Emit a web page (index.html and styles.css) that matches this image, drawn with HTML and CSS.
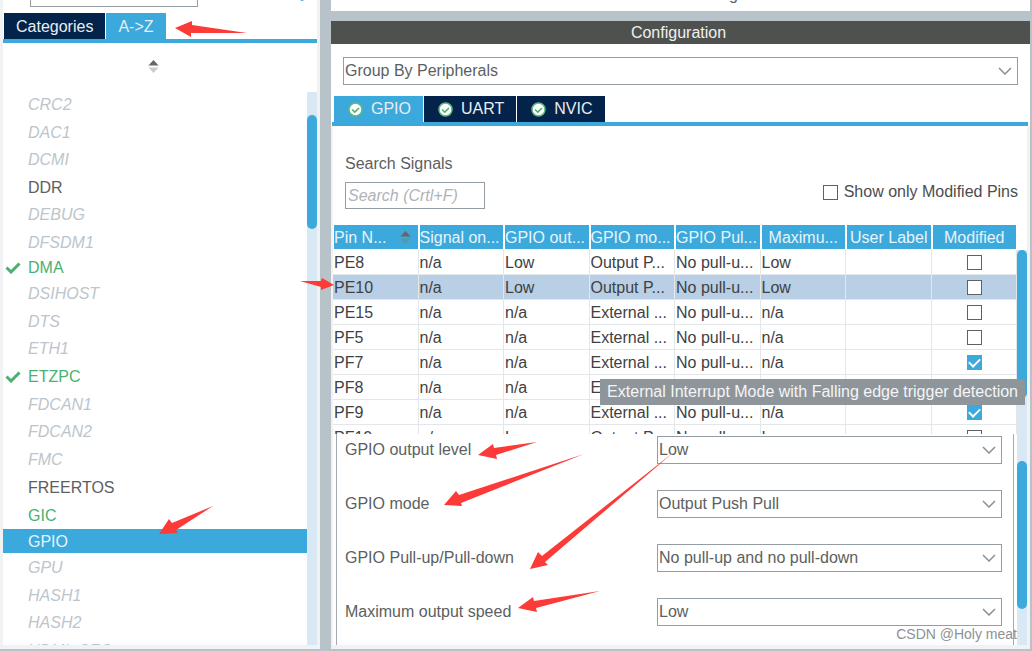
FILE: index.html
```html
<!DOCTYPE html>
<html lang="en">
<head>
<meta charset="utf-8">
<title>Pinout &amp; Configuration</title>
<link rel="stylesheet" href="styles.css">
</head>
<body>
<div class="app">
  <aside class="sidebar">
    <div class="sidebar-top">
      <input class="quick-search" type="text" aria-label="Search">
      <span class="gear"></span>
    </div>
    <div class="tabs">
      <button class="tab" type="button">Categories</button>
      <button class="tab active" type="button">A-&gt;Z</button>
    </div>
    <div class="sort-row">
      <svg class="sort" viewBox="0 0 11 14"><path d="M0 6 5.500 0 11 6z" fill="#666"/><path d="M0 8h11L5.500 14z" fill="#ccc"/></svg>
    </div>
    <div class="list-area">
      <ul class="list">
        <li>CRC2</li>
        <li>DAC1</li>
        <li>DCMI</li>
        <li class="plain">DDR</li>
        <li>DEBUG</li>
        <li>DFSDM1</li>
        <li class="on"><svg class="tick" viewBox="0 0 16 12"><path d="M1.500 5.500 6 10 14.500 1.500" /></svg>DMA</li>
        <li>DSIHOST</li>
        <li>DTS</li>
        <li>ETH1</li>
        <li class="on"><svg class="tick" viewBox="0 0 16 12"><path d="M1.500 5.500 6 10 14.500 1.500" /></svg>ETZPC</li>
        <li>FDCAN1</li>
        <li>FDCAN2</li>
        <li>FMC</li>
        <li class="plain">FREERTOS</li>
        <li class="on">GIC</li>
        <li class="selected">GPIO</li>
        <li>GPU</li>
        <li>HASH1</li>
        <li>HASH2</li>
        <li>HDMI_CEC</li>
      </ul>
      <div class="track list-track"><div class="thumb"></div></div>
    </div>
  </aside>

  <main class="content">
    <div class="mode-strip"><span>g</span></div>
    <section class="config">
      <h1 class="config-title">Configuration</h1>
      <div class="group">
        <div class="combo">
          <select aria-label="Grouping"><option>Group By Peripherals</option></select>
          <svg class="chevron" viewBox="0 0 14 8"><path d="M1 1l6 6 6-6"/></svg>
        </div>
      </div>
      <div class="tabs config-tabs">
        <button class="tab active" type="button"><svg class="ok" viewBox="0 0 15 15"><circle cx="7.500" cy="7.500" r="6.500"/><path d="M4 7.500l2.800 2.600L11 6"/></svg>GPIO</button>
        <button class="tab" type="button"><svg class="ok" viewBox="0 0 15 15"><circle cx="7.500" cy="7.500" r="6.500"/><path d="M4 7.500l2.800 2.600L11 6"/></svg>UART</button>
        <button class="tab" type="button"><svg class="ok" viewBox="0 0 15 15"><circle cx="7.500" cy="7.500" r="6.500"/><path d="M4 7.500l2.800 2.600L11 6"/></svg>NVIC</button>
      </div>
      <div class="panel">
        <div class="filter">
          <div class="search">
            <label for="signals">Search Signals</label>
            <input id="signals" type="text" placeholder="Search (Crtl+F)">
          </div>
          <label class="only"><input type="checkbox">Show only Modified Pins</label>
        </div>
        <div class="pins">
          <table>
            <thead>
              <tr>
                <th>Pin N...<svg class="sort" viewBox="0 0 11 14"><path d="M0 6 5.500 0 11 6z" fill="#666"/><path d="M0 8h11L5.500 14z" fill="#5596b8"/></svg></th>
                <th>Signal on...</th><th>GPIO out...</th><th>GPIO mo...</th><th>GPIO Pul...</th>
                <th class="center">Maximu...</th><th class="center">User Label</th><th class="center">Modified</th>
              </tr>
            </thead>
            <tbody>
              <tr><td>PE8</td><td>n/a</td><td>Low</td><td>Output P...</td><td>No pull-u...</td><td>Low</td><td></td><td class="center"><input type="checkbox" aria-label="PE8 modified"></td></tr>
              <tr class="current"><td>PE10</td><td>n/a</td><td>Low</td><td>Output P...</td><td>No pull-u...</td><td>Low</td><td></td><td class="center"><input type="checkbox" aria-label="PE10 modified"></td></tr>
              <tr><td>PE15</td><td>n/a</td><td>n/a</td><td>External ...</td><td>No pull-u...</td><td>n/a</td><td></td><td class="center"><input type="checkbox" aria-label="PE15 modified"></td></tr>
              <tr><td>PF5</td><td>n/a</td><td>n/a</td><td>External ...</td><td>No pull-u...</td><td>n/a</td><td></td><td class="center"><input type="checkbox" aria-label="PF5 modified"></td></tr>
              <tr><td>PF7</td><td>n/a</td><td>n/a</td><td>External ...</td><td>No pull-u...</td><td>n/a</td><td></td><td class="center"><input type="checkbox" checked aria-label="PF7 modified"></td></tr>
              <tr><td>PF8</td><td>n/a</td><td>n/a</td><td>External ...</td><td>No pull-u...</td><td>n/a</td><td></td><td class="center"><input type="checkbox" checked aria-label="PF8 modified"></td></tr>
              <tr><td>PF9</td><td>n/a</td><td>n/a</td><td>External ...</td><td>No pull-u...</td><td>n/a</td><td></td><td class="center"><input type="checkbox" checked aria-label="PF9 modified"></td></tr>
              <tr><td>PF10</td><td>n/a</td><td>Low</td><td>Output P...</td><td>No pull-u...</td><td>Low</td><td></td><td class="center"><input type="checkbox" aria-label="PF10 modified"></td></tr>
            </tbody>
          </table>
          <div class="track pins-track"><div class="thumb"></div></div>
          <div class="tooltip" role="tooltip">External Interrupt Mode with Falling edge trigger detection</div>
        </div>
        <div class="settings">
          <form class="form">
            <label for="level">GPIO output level</label>
            <div class="combo"><select id="level"><option>Low</option></select><svg class="chevron" viewBox="0 0 14 8"><path d="M1 1l6 6 6-6"/></svg></div>
            <label for="mode">GPIO mode</label>
            <div class="combo"><select id="mode"><option>Output Push Pull</option></select><svg class="chevron" viewBox="0 0 14 8"><path d="M1 1l6 6 6-6"/></svg></div>
            <label for="pull">GPIO Pull-up/Pull-down</label>
            <div class="combo"><select id="pull"><option>No pull-up and no pull-down</option></select><svg class="chevron" viewBox="0 0 14 8"><path d="M1 1l6 6 6-6"/></svg></div>
            <label for="speed">Maximum output speed</label>
            <div class="combo"><select id="speed"><option>Low</option></select><svg class="chevron" viewBox="0 0 14 8"><path d="M1 1l6 6 6-6"/></svg></div>
          </form>
          <div class="track form-track"><div class="thumb"></div></div>
        </div>
      </div>
    </section>
  </main>
</div>

<svg class="arrows" width="1032" height="651" viewBox="0 0 1032 651" aria-hidden="true">
  <path d="M175 28 192 21 192 25 247 33 191 33 191 37z"/>
  <path d="M300 281 321 281 322 278 334 285 321 290 321 287z"/>
  <path d="M159 534 169 519 172 523 213 506 176 530 178 533z"/>
  <path d="M478 455 493 444 494 448 537 442 496 455 497 459z"/>
  <path d="M444 505 456 491 459 495 584 454 461 503 462 506z"/>
  <path d="M530 569 538 552 542 556 674 452 545 562 548 565z"/>
  <path d="M518 608 533 597 534 601 600 591 536 608 537 612z"/>
</svg>
<div class="watermark">CSDN @Holy meat</div>
</body>
</html>
```
FILE: styles.css
```css
* { box-sizing: border-box; }

body {
  margin: 0;
  font: 16px/20px "Liberation Sans", Arial, sans-serif;
  color: #5c5f61;
  background: #b7c3c9;
}

button, input, select { font: inherit; color: inherit; }

.app {
  display: flex;
  gap: 11px;
  height: 100vh;
  min-height: 600px;
  padding: 0 2px 2px 0;
  overflow: hidden;
}

/* Left: peripheral list */
.sidebar {
  flex: 0 0 320px;
  display: flex;
  flex-direction: column;
  background: #fff;
  border: solid #f0f2f4;
  border-width: 0 3px 4px;
}

.sidebar-top {
  flex: none;
  display: flex;
  align-items: flex-end;
  justify-content: space-between;
  height: 13px;
  padding: 0 13px 6px 27px;
  overflow: hidden;
}

.quick-search {
  width: 168px;
  height: 28px;
  border: 1px solid #949da3;
  background: #fff;
}

.gear {
  width: 4px;
  height: 7px;
  border-radius: 2px;
  background: linear-gradient(#3ba9dc 1px, transparent 1px);
}

.tabs {
  flex: none;
  display: flex;
  gap: 1px;
  padding-left: 1px;
  border-bottom: 4px solid #3ba9dc;
}

.tab {
  display: flex;
  align-items: center;
  gap: 8px;
  height: 26px;
  padding: 2px 12px 0;
  border: 0;
  background: #03234b;
  color: #e8edf2;
}

.tab.active { background: #3ba9dc; }

.sort-row {
  flex: none;
  display: flex;
  justify-content: center;
  align-items: center;
  height: 47px;
  padding-right: 13px;
}

.sort { width: 11px; height: 13px; }

.list-area {
  flex: 1;
  min-height: 0;
  display: flex;
  overflow: hidden;
}

.list {
  flex: 1;
  display: grid;
  grid-template-rows: repeat(3, 28px 27px) 24px 28px 27px 28px 28px 27px 28px 28px 28px 28px 24px 28px 27px 28px 28px;
  margin: 0;
  padding: 0;
  list-style: none;
}

.list li {
  display: flex;
  align-items: center;
  padding: 2px 0 0 25px;
  font-style: italic;
  color: #bcc5cc;
}

.list .plain { font-style: normal; color: #5c5f61; }
.list .on { font-style: normal; color: #49b170; }
.list .selected { font-style: normal; color: #e8f4fb; background: #3ba9dc; }

.tick {
  width: 16px;
  height: 12px;
  margin: 0 7px 0 -23px;
  fill: none;
  stroke: #49b170;
  stroke-width: 3;
}

.track {
  flex: none;
  width: 10px;
  background: #d9e8f5;
}

.thumb {
  border-radius: 5px;
  background: #3ba9dc;
}

.list-track { margin-top: 2px; padding-top: 23px; }
.list-track .thumb { height: 114px; }

/* Right: configuration */
.content {
  flex: 1;
  min-width: 0;
  display: flex;
  flex-direction: column;
  gap: 10px;
}

.mode-strip {
  flex: none;
  display: flex;
  align-items: flex-end;
  justify-content: center;
  height: 11px;
  padding: 0 0 6px 106px;
  background: #fff;
  overflow: hidden;
}

.config {
  flex: 1;
  min-height: 0;
  display: flex;
  flex-direction: column;
  background: #fff;
}

.config-title {
  flex: none;
  margin: 0;
  padding: 2px 4px 1px 0;
  font-size: 16px;
  font-weight: normal;
  line-height: 20px;
  text-align: center;
  color: #f0f0f0;
  background: #4f514f;
}

.group { padding: 13px 12px 11px; }

.combo {
  display: grid;
  align-items: center;
}

.combo > * { grid-area: 1 / 1; }

select {
  appearance: none;
  width: 100%;
  height: 28px;
  padding: 0 24px 0 1px;
  border: 1px solid #949da3;
  border-radius: 0;
  background: #fff;
}

.chevron {
  justify-self: end;
  width: 14px;
  height: 8px;
  margin-right: 6px;
  fill: none;
  stroke: #8a8f93;
  stroke-width: 1.5;
  pointer-events: none;
}

.config-tabs { margin: 0 2px 0 1px; padding-left: 2px; }
.config-tabs .tab { padding: 0 12px 0 14px; }

.ok { width: 15px; height: 15px; }
.ok circle { fill: #fff; stroke: #5dba80; stroke-width: 1.5; }
.ok path { fill: none; stroke: #49b170; stroke-width: 1.5; }

.panel {
  flex: 1;
  min-height: 0;
  display: flex;
  flex-direction: column;
  border: solid #f0f2f4;
  border-width: 0 3px 4px 2px;
}

.filter {
  flex: none;
  display: flex;
  justify-content: space-between;
  align-items: flex-end;
  height: 99px;
  padding: 0 8px 16px 12px;
}

.search { display: flex; flex-direction: column; gap: 8px; }

.search input {
  width: 140px;
  height: 27px;
  padding: 0 2px;
  border: 1px solid #949da3;
}

.search input::placeholder { color: #b0b3b6; font-style: italic; opacity: 1; }

.only {
  display: flex;
  align-items: center;
  gap: 6px;
  height: 34px;
  margin-right: 1px;
  color: #4b4d4f;
}

input[type="checkbox"] {
  appearance: none;
  display: grid;
  place-items: center;
  width: 15px;
  height: 15px;
  margin: 0;
  border: 1px solid #5f6163;
  background: #fff;
}

input[type="checkbox"]:checked { border-color: #3ba9dc; background: #3ba9dc; }

input[type="checkbox"]:checked::after {
  content: "";
  width: 5px;
  height: 9px;
  margin-bottom: 2px;
  border: solid #fff;
  border-width: 0 2px 2px 0;
  transform: rotate(45deg);
}

.pins {
  position: relative;
  flex: none;
  display: flex;
  height: 209px;
  overflow: hidden;
}

table {
  flex: 1;
  width: 100%;
  height: 225px;
  table-layout: fixed;
  border-collapse: separate;
  border-spacing: 0;
  color: #3f4143;
}

th, td {
  height: 25px;
  padding: 1px 0 0 1px;
  text-align: left;
  white-space: nowrap;
  overflow: hidden;
}

th {
  border: solid #fff;
  border-width: 0 1px 1px;
  padding-left: 0;
  font-weight: normal;
  color: #e8f4fb;
  background: #3ba9dc;
}

th .sort { float: right; margin: 3px 7px 0 0; }

td {
  border: solid #e3e7ea;
  border-width: 0 1px 1px 0;
}

.current td { background: #b8cfe5; }

.center { text-align: center; }
td.center input { margin: 0 auto; }

.pins-track { margin-top: 25px; }
.pins-track .thumb { height: 148px; }

.tooltip {
  position: absolute;
  right: 2px;
  top: 154px;
  padding: 3px 7px;
  white-space: nowrap;
  color: #f4f5f6;
  background: #8f969b;
}

.settings {
  flex: 1;
  min-height: 0;
  display: flex;
  gap: 3px;
}

.form {
  flex: 1;
  display: grid;
  grid-template-columns: 312px 1fr;
  align-content: start;
  align-items: center;
  row-gap: 26px;
  margin-left: 3px;
  padding: 2px 11px 0 8px;
  border: solid #a3abb1;
  border-width: 0 1px;
}

.form-track { padding-top: 27px; }
.form-track .thumb { height: 148px; }

.arrows {
  position: absolute;
  top: 0;
  left: 0;
  fill: #fc3a38;
  pointer-events: none;
}

.watermark {
  position: absolute;
  right: 15px;
  bottom: 7px;
  font-size: 14px;
  color: #8e9194;
}
```
